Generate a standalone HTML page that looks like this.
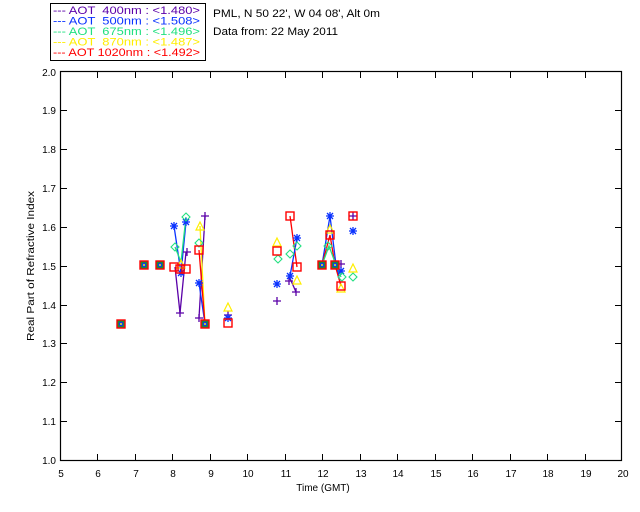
<!DOCTYPE html>
<html><head><meta charset="utf-8"><style>
html,body{margin:0;padding:0;background:#fff;}
svg{display:block;font-family:"Liberation Sans",sans-serif;}
</style></head><body>
<svg width="640" height="512" viewBox="0 0 640 512" xmlns="http://www.w3.org/2000/svg">
<defs>
<g id="pl"><path d="M-4 0H4M0 -4V4" stroke="#5a00a8" stroke-width="1.3" fill="none"/></g>
<g id="st"><path d="M-4 0H4M0 -4V4M-3 -3L3 3M-3 3L3 -3" stroke="#0a32ff" stroke-width="1.3" fill="none"/></g>
<g id="di"><path d="M0 -4L4 0L0 4L-4 0Z" stroke="#22e080" stroke-width="1.1" fill="none"/></g>
<g id="tr"><path d="M0 -5L4 3H-4Z" stroke="#ffee00" stroke-width="1.2" fill="none"/></g>
<g id="sq"><rect x="-4" y="-4" width="8" height="8" stroke="#ff0000" stroke-width="1.4" fill="none"/></g>
<g id="stack"><rect x="-4" y="-4" width="8" height="8" stroke="#ff0000" stroke-width="1.4" fill="#1a8a3a"/><circle r="2.2" fill="#0a32ff"/><circle r="1" fill="#ffee00"/></g>
</defs>
<rect x="50.5" y="3.5" width="155" height="57" fill="none" stroke="#000"/>
<g font-size="11">
<text x="53" y="14" fill="#5a00a8" textLength="147" lengthAdjust="spacingAndGlyphs">--- AOT &#160;400nm : &lt;1.480&gt;</text>
<text x="53" y="24.5" fill="#0a32ff" textLength="147" lengthAdjust="spacingAndGlyphs">--- AOT &#160;500nm : &lt;1.508&gt;</text>
<text x="53" y="35" fill="#22e080" textLength="147" lengthAdjust="spacingAndGlyphs">--- AOT &#160;675nm : &lt;1.496&gt;</text>
<text x="53" y="45.5" fill="#ffee00" textLength="147" lengthAdjust="spacingAndGlyphs">--- AOT &#160;870nm : &lt;1.487&gt;</text>
<text x="53" y="56" fill="#ff0000" textLength="147" lengthAdjust="spacingAndGlyphs">--- AOT 1020nm : &lt;1.492&gt;</text>
<text x="213" y="17" fill="#000" textLength="167" lengthAdjust="spacingAndGlyphs">PML, N 50 22', W 04 08', Alt 0m</text>
<text x="213" y="35" fill="#000" textLength="125" lengthAdjust="spacingAndGlyphs">Data from: 22 May 2011</text>
</g>
<rect x="60.5" y="71.5" width="561" height="389" fill="none" stroke="#000" stroke-width="1.2"/>
<g stroke="#000" stroke-width="1">
<path d="M97.5 460V454M135.5 460V454M172.5 460V454M210.5 460V454M247.5 460V454M285.5 460V454M322.5 460V454M360.5 460V454M397.5 460V454M435.5 460V454M472.5 460V454M510.5 460V454M547.5 460V454M585.5 460V454"/>
<path d="M97.5 72V78M135.5 72V78M172.5 72V78M210.5 72V78M247.5 72V78M285.5 72V78M322.5 72V78M360.5 72V78M397.5 72V78M435.5 72V78M472.5 72V78M510.5 72V78M547.5 72V78M585.5 72V78"/>
<path d="M60 421.5H67M60 382.5H67M60 343.5H67M60 305.5H67M60 266.5H67M60 227.5H67M60 188.5H67M60 149.5H67M60 110.5H67"/>
<path d="M622 421.5H615M622 382.5H615M622 343.5H615M622 305.5H615M622 266.5H615M622 227.5H615M622 188.5H615M622 149.5H615M622 110.5H615"/>
</g>
<g font-size="10" fill="#000" text-anchor="middle">
<text x="61" y="477">5</text><text x="98" y="477">6</text><text x="136" y="477">7</text><text x="173" y="477">8</text><text x="211" y="477">9</text><text x="248" y="477">10</text><text x="286" y="477">11</text><text x="323" y="477">12</text><text x="361" y="477">13</text><text x="398" y="477">14</text><text x="436" y="477">15</text><text x="473" y="477">16</text><text x="511" y="477">17</text><text x="548" y="477">18</text><text x="586" y="477">19</text><text x="623" y="477">20</text>
<text x="323" y="491">Time (GMT)</text>
</g>
<g font-size="10" fill="#000" text-anchor="end">
<text x="56" y="464">1.0</text><text x="56" y="425">1.1</text><text x="56" y="386">1.2</text><text x="56" y="347">1.3</text><text x="56" y="309">1.4</text><text x="56" y="270">1.5</text><text x="56" y="231">1.6</text><text x="56" y="192">1.7</text><text x="56" y="153">1.8</text><text x="56" y="114">1.9</text><text x="56" y="76">2.0</text>
</g>
<text x="-75" y="0" font-size="10" textLength="150" lengthAdjust="spacingAndGlyphs" transform="translate(34 266) rotate(-90)">Real Part of Refractive Index</text>
<g fill="none" stroke-width="1.3">
<path d="M175 267L180 313L186 252" stroke="#5a00a8"/>
<path d="M199 318L205 216" stroke="#5a00a8"/>
<path d="M174 226L181 273L186 222" stroke="#0a32ff"/>
<path d="M175 247L181 262L186 217" stroke="#22e080"/>
<path d="M199 283L205 324" stroke="#0a32ff"/>
<path d="M200 226L205 324" stroke="#ffee00"/>
<path d="M199 250L205 324" stroke="#ff0000"/>
<path d="M290 216L297 267" stroke="#ff0000"/>
<path d="M289 276L296 292" stroke="#5a00a8"/>
<path d="M290 276L297 238" stroke="#0a32ff"/>
<path d="M322 265L330 216L336 265L341 286" stroke="#0a32ff"/>
<path d="M322 265L330 235L335 265L341 286" stroke="#ff0000"/>
<path d="M322 265L329 246L336 265L341 277" stroke="#22e080"/>
</g>
<use href="#stack" x="121" y="324"/><use href="#stack" x="144" y="265"/><use href="#stack" x="160" y="265"/>
<use href="#pl" x="180" y="313"/><use href="#pl" x="187" y="252"/><use href="#pl" x="205" y="216"/><use href="#pl" x="199" y="318"/><use href="#pl" x="228" y="315"/><use href="#pl" x="277" y="301"/><use href="#pl" x="289" y="281"/><use href="#pl" x="296" y="292"/><use href="#pl" x="341" y="264"/><use href="#pl" x="353" y="216"/>
<use href="#st" x="174" y="226"/><use href="#st" x="186" y="222"/><use href="#st" x="181" y="273"/><use href="#st" x="199" y="283"/><use href="#st" x="228" y="318"/><use href="#st" x="277" y="284"/><use href="#st" x="290" y="276"/><use href="#st" x="297" y="238"/><use href="#st" x="330" y="216"/><use href="#st" x="341" y="271"/><use href="#st" x="353" y="231"/>
<use href="#di" x="175" y="247"/><use href="#di" x="186" y="217"/><use href="#di" x="199" y="243"/><use href="#di" x="278" y="259"/><use href="#di" x="290" y="254"/><use href="#di" x="297" y="246"/><use href="#di" x="328" y="246"/><use href="#di" x="342" y="277"/><use href="#di" x="353" y="277"/>
<use href="#tr" x="181" y="265"/><use href="#tr" x="200" y="227"/><use href="#tr" x="228" y="308"/><use href="#tr" x="277" y="243"/><use href="#tr" x="297" y="281"/><use href="#tr" x="341" y="289"/><use href="#tr" x="353" y="269"/><use href="#tr" x="330" y="230"/>
<use href="#sq" x="174" y="267"/><use href="#sq" x="180" y="269"/><use href="#sq" x="186" y="269"/><use href="#sq" x="199" y="250"/><use href="#stack" x="205" y="324"/><use href="#sq" x="228" y="323"/><use href="#sq" x="277" y="251"/><use href="#sq" x="290" y="216"/><use href="#sq" x="297" y="267"/><use href="#stack" x="322" y="265"/><use href="#sq" x="330" y="235"/><use href="#stack" x="335" y="265"/><use href="#sq" x="341" y="286"/><use href="#sq" x="353" y="216"/>
</svg>
</body></html>
